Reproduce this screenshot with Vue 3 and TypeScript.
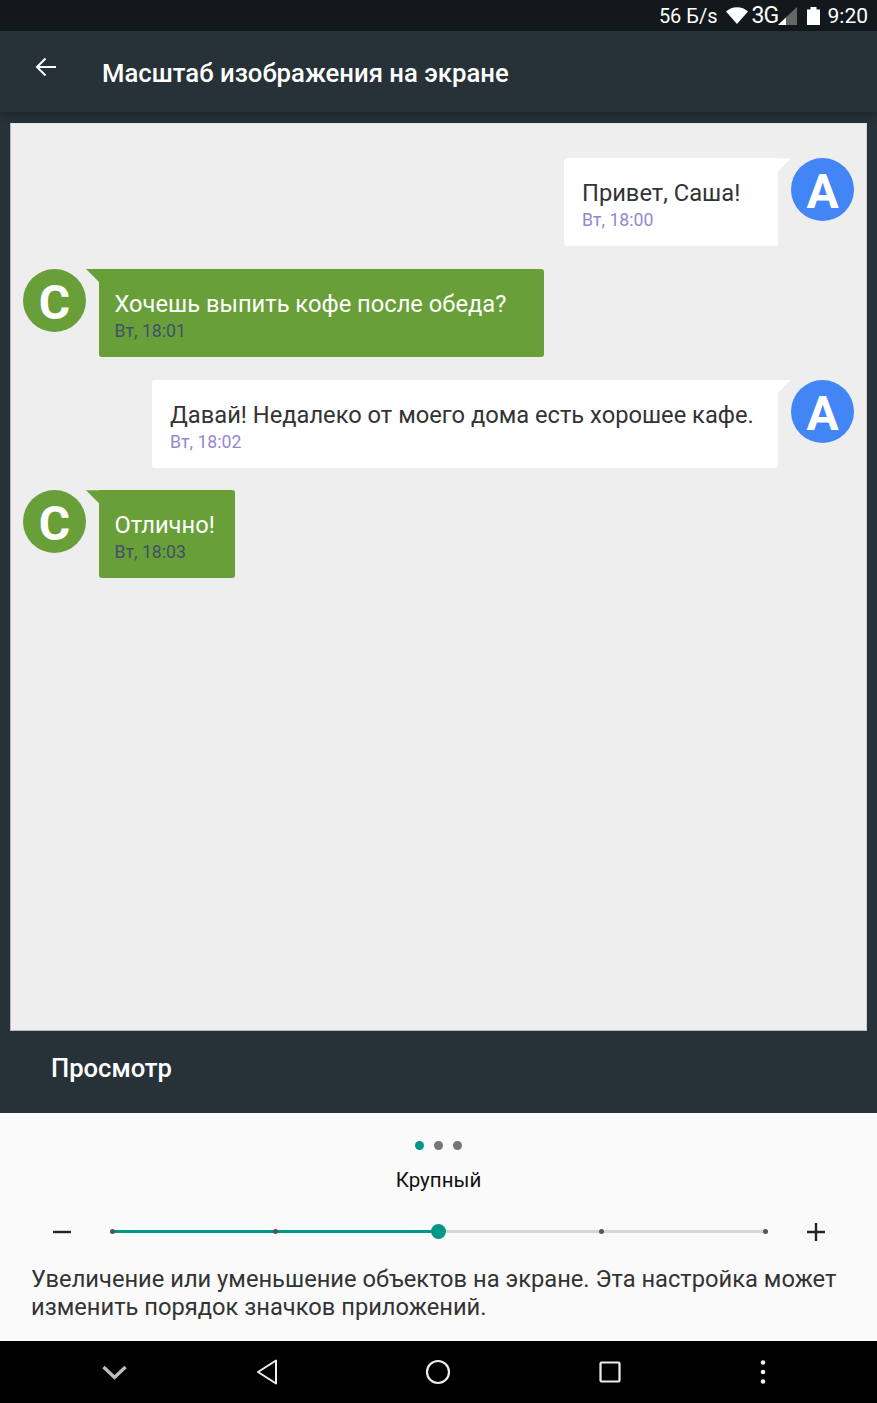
<script setup lang="ts">
interface Msg { id: number; side: 'me' | 'them'; text: string; time: string; width: number }
const messages: Msg[] = [
  { id: 1, side: 'me', text: 'Привет, Саша!', time: 'Вт, 18:00', width: 214 },
  { id: 2, side: 'them', text: 'Хочешь выпить кофе после обеда?', time: 'Вт, 18:01', width: 445 },
  { id: 3, side: 'me', text: 'Давай! Недалеко от моего дома есть хорошее кафе.', time: 'Вт, 18:02', width: 626 },
  { id: 4, side: 'them', text: 'Отлично!', time: 'Вт, 18:03', width: 136 },
]
const ticks = [1, 2, 3, 4, 5]
</script>

<template>
  <div class="screen">
    <div class="status">
      <span class="st-text">56 Б/s</span>
      <svg class="wifi" width="22" height="17" viewBox="0 0 22 17"><path d="M0 4.500C3 1.800 6.800.3 11 .3s8 1.500 11 4.200L11 17z" fill="#fff"/></svg>
      <span class="st-3g">3G</span>
      <svg class="signal" width="19" height="18" viewBox="0 0 19 18"><path d="M0 18L19 0v18z" fill="#666"/><path d="M0 18l8-7.600V18z" fill="#fff"/></svg>
      <svg class="battery" width="13" height="18" viewBox="0 0 13 18"><path d="M0 2.500h3.500V0h6v2.500H13V18H0z" fill="#fff"/></svg>
      <span class="clock">9:20</span>
    </div>

    <header class="appbar">
      <svg class="back" width="22" height="20" viewBox="0 0 22 20"><path d="M21 10H2M10.500 1.500L2 10l8.500 8.500" fill="none" stroke="#fff" stroke-width="2"/></svg>
      <h1 class="title">Масштаб изображения на экране</h1>
    </header>

    <main class="preview">
      <div v-for="m in messages" :key="m.id" class="row" :class="m.side">
        <div class="avatar">{{ m.side === 'me' ? 'A' : 'C' }}</div>
        <div class="bubble" :style="{ width: m.width + 'px' }">
          <div class="text">{{ m.text }}</div>
          <div class="time">{{ m.time }}</div>
        </div>
      </div>
    </main>

    <div class="caption">Просмотр</div>

    <section class="panel">
      <div class="dots"><i class="dot on"></i><i class="dot"></i><i class="dot"></i></div>
      <div class="size">Крупный</div>
      <div class="slider-row">
        <svg class="sign" width="20" height="20" viewBox="0 0 20 20"><path d="M1 11h18" stroke="#222" stroke-width="2.400"/></svg>
        <div class="slider">
          <div class="fill"></div>
          <i v-for="t in ticks" :key="t" class="tick"></i>
          <div class="thumb"></div>
        </div>
        <svg class="sign" width="20" height="20" viewBox="0 0 20 20"><path d="M1 11h18M10 2v18" stroke="#222" stroke-width="2.400"/></svg>
      </div>
      <p class="desc">Увеличение или уменьшение объектов на экране. Эта настройка может изменить порядок значков приложений.</p>
    </section>

    <nav class="navbar">
      <svg class="ic-hide" width="28" height="16" viewBox="0 0 28 16"><path d="M2.500 3l11 10.500L24.500 3" fill="none" stroke="#bbb" stroke-width="3.400"/></svg>
      <svg class="ic-back" width="22" height="26" viewBox="0 0 22 26"><path d="M20 1.500v23L2 13z" fill="none" stroke="#eee" stroke-width="2" stroke-linejoin="round"/></svg>
      <svg class="ic-home" width="26" height="26" viewBox="0 0 26 26"><circle cx="13" cy="13" r="11" fill="none" stroke="#eee" stroke-width="2.200"/></svg>
      <svg class="ic-recent" width="22" height="22" viewBox="0 0 22 22"><rect x="1.500" y="1.500" width="19" height="19" rx="1" fill="none" stroke="#eee" stroke-width="2.200"/></svg>
      <svg class="ic-more" width="8" height="26" viewBox="0 0 8 26"><circle cx="4" cy="3.500" r="2.300" fill="#eee"/><circle cx="4" cy="13" r="2.300" fill="#eee"/><circle cx="4" cy="22.500" r="2.300" fill="#eee"/></svg>
    </nav>
  </div>
</template>

<style>
html, body { margin: 0; background: #263238; }
</style>

<style scoped>
.screen {
  width: 877px;
  height: 1403px;
  display: flex;
  flex-direction: column;
  background: #263238;
  font-family: Roboto, "Noto Sans", sans-serif;
  overflow: hidden;
}
.status {
  height: 31px;
  flex: none;
  background: #12181b;
  color: #fff;
  display: flex;
  align-items: center;
  padding-right: 9px;
  justify-content: flex-end;
  box-sizing: border-box;
}
.st-text { font-size: 20px; line-height: 32px; }
.clock { font-size: 21px; line-height: 32px; margin-left: 8px; }
.st-3g { font-size: 23px; letter-spacing: -1px; margin-left: 4px; width: 26px; line-height: 32px; }
.wifi { margin-left: 8px; }
.battery { margin-left: 10px; }
.appbar {
  height: 81px;
  flex: none;
  display: flex;
  align-items: center;
  background: #263238;
  box-shadow: 0 3px 8px rgba(0, 0, 0, 0.25);
  position: relative;
}
.back { margin-left: 35px; margin-top: -10px; }
.title {
  margin: 2px 0 0 45px;
  font-size: 25.700px;
  font-weight: 500;
  color: #fff;
  line-height: 32px;
}
.preview {
  margin: 11px 10px 0;
  height: 908px;
  flex: none;
  background: #eeeeee;
  border: 1px solid #b5bbbd;
  border-top-color: #e2e4e4;
  border-right-color: #d0d4d5;
  box-sizing: border-box;
  padding: 34.400px 12px 0;
  display: flex;
  flex-direction: column;
  gap: 22.670px;
}
.row { display: flex; align-items: flex-start; }
.row.me { flex-direction: row-reverse; }
.avatar {
  width: 63px;
  height: 63px;
  border-radius: 50%;
  flex: none;
  color: #fff;
  font-size: 48px;
  font-weight: 700;
  text-align: center;
  line-height: 68px;
}
.me .avatar { background: #4285f4; }
.them .avatar { background: #689f38; }
.bubble {
  position: relative;
  height: 88px;
  box-sizing: border-box;
  border-radius: 3px;
}
.me .bubble {
  background: #fff;
  margin-right: 13px;
  padding: 21px 0 0 18px;
  border-top-right-radius: 0;
}
.them .bubble {
  background: #689f38;
  margin-left: 13px;
  padding: 21px 0 0 15.500px;
  border-top-left-radius: 0;
}
.bubble::after {
  content: "";
  position: absolute;
  top: 0;
  width: 13px;
  height: 13px;
}
.me .bubble::after {
  left: 100%;
  background: #fff;
  clip-path: polygon(0 0, 100% 0, 0 100%);
}
.them .bubble::after {
  right: 100%;
  background: #689f38;
  clip-path: polygon(0 0, 100% 0, 100% 100%);
}
.text { font-size: 23.700px; line-height: 29px; white-space: nowrap; }
.me .text { color: #333; }
.them .text { color: #fff; }
.time { font-size: 17.700px; line-height: 24px; }
.me .time { color: #9588cf; }
.them .time { color: #3f5168; }
.caption {
  height: 82px;
  flex: none;
  box-sizing: border-box;
  padding: 20px 0 0 51px;
  color: #fff;
  font-size: 25.600px;
  font-weight: 500;
  line-height: 34px;
}
.panel {
  height: 228px;
  flex: none;
  background: #fafafa;
  box-sizing: border-box;
  padding-top: 28px;
}
.dots { display: flex; justify-content: center; gap: 10px; height: 9px; }
.dot { width: 9px; height: 9px; border-radius: 50%; background: #757575; }
.dot.on { background: #009688; }
.size { margin-top: 17px; text-align: center; font-size: 20.500px; line-height: 26px; color: #111; }
.slider-row {
  margin-top: 28px;
  padding: 0 51px 0 52px;
  display: flex;
  align-items: center;
  justify-content: space-between;
  height: 20px;
}
.slider {
  position: relative;
  width: 653px;
  height: 3px;
  margin-right: 1px;
  background: #d6d6d6;
  display: flex;
  justify-content: space-between;
  align-items: center;
}
.fill {
  position: absolute;
  left: 0;
  top: 0;
  width: 50%;
  height: 3px;
  background: #009688;
}
.tick {
  position: relative;
  width: 5px;
  height: 5px;
  margin: 0 -2.500px;
  border-radius: 50%;
  background: #555;
}
.thumb {
  position: absolute;
  left: 50%;
  top: 50%;
  width: 15px;
  height: 15px;
  margin: -7.500px 0 0 -7.500px;
  border-radius: 50%;
  background: #009688;
}
.desc {
  margin: 24px 31px 0;
  font-size: 23.700px;
  line-height: 28px;
  color: #333;
}
.navbar {
  height: 62px;
  flex: none;
  background: #000;
  box-sizing: border-box;
  padding-left: 101px;
  display: flex;
  align-items: center;
}
.ic-back { margin-left: 127px; }
.ic-home { margin-left: 147px; }
.ic-recent { margin-left: 148px; }
.ic-more { margin-left: 138px; }
</style>
